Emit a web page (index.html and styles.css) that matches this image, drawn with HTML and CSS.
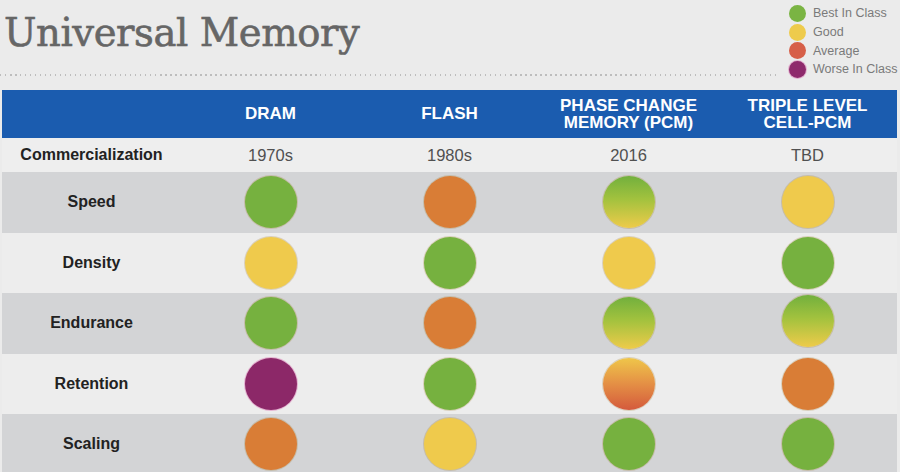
FILE: index.html
```html
<!DOCTYPE html>
<html>
<head>
<meta charset="utf-8">
<link rel="stylesheet" href="styles.css">
</head>
<body>
<div class="top">
  <div class="title-col">
    <h1 class="title">Universal Memory</h1>
    <div class="dots"></div>
  </div>
  <ul class="legend">
    <li><span class="ldot green"></span>Best In Class</li>
    <li><span class="ldot yellow"></span>Good</li>
    <li><span class="ldot red"></span>Average</li>
    <li><span class="ldot purple"></span>Worse In Class</li>
  </ul>
</div>
<div class="table">
  <div class="row head">
    <div class="cell"></div>
    <div class="cell">DRAM</div>
    <div class="cell">FLASH</div>
    <div class="cell">PHASE CHANGE<br>MEMORY (PCM)</div>
    <div class="cell">TRIPLE LEVEL<br>CELL-PCM</div>
  </div>
  <div class="row comm">
    <div class="cell label">Commercialization</div>
    <div class="cell">1970s</div>
    <div class="cell">1980s</div>
    <div class="cell">2016</div>
    <div class="cell">TBD</div>
  </div>
  <div class="row dark">
    <div class="cell label">Speed</div>
    <div class="cell"><span class="dot green"></span></div>
    <div class="cell"><span class="dot orange"></span></div>
    <div class="cell"><span class="dot gy"></span></div>
    <div class="cell"><span class="dot yellow"></span></div>
  </div>
  <div class="row light">
    <div class="cell label">Density</div>
    <div class="cell"><span class="dot yellow"></span></div>
    <div class="cell"><span class="dot green"></span></div>
    <div class="cell"><span class="dot yellow"></span></div>
    <div class="cell"><span class="dot green"></span></div>
  </div>
  <div class="row dark">
    <div class="cell label">Endurance</div>
    <div class="cell"><span class="dot green"></span></div>
    <div class="cell"><span class="dot orange"></span></div>
    <div class="cell"><span class="dot gy"></span></div>
    <div class="cell"><span class="dot gy up"></span></div>
  </div>
  <div class="row light">
    <div class="cell label">Retention</div>
    <div class="cell"><span class="dot purple"></span></div>
    <div class="cell"><span class="dot green"></span></div>
    <div class="cell"><span class="dot yor"></span></div>
    <div class="cell"><span class="dot orange"></span></div>
  </div>
  <div class="row dark">
    <div class="cell label">Scaling</div>
    <div class="cell"><span class="dot orange"></span></div>
    <div class="cell"><span class="dot yellow"></span></div>
    <div class="cell"><span class="dot green"></span></div>
    <div class="cell"><span class="dot green"></span></div>
  </div>
</div>
</body>
</html>
```
FILE: styles.css
```css
html, body {
  margin: 0;
  padding: 0;
  background: #ebebeb;
  font-family: "Liberation Sans", Arial, sans-serif;
  overflow: hidden;
}
.top {
  display: flex;
  height: 90px;
}
.title-col {
  flex: 1;
  display: flex;
  flex-direction: column;
}
.title {
  margin: 0;
  padding: 9px 0 0 4px;
  font-family: "DejaVu Serif", serif;
  font-weight: normal;
  font-size: 38.5px;
  line-height: 48px;
  color: #666;
  -webkit-text-stroke: 0.6px #666;
  letter-spacing: -0.4px;
  height: 65px;
  box-sizing: border-box;
}
.dots {
  margin-top: 9px;
  width: 776px;
  height: 2px;
  background: repeating-linear-gradient(to right, #bdbdbd 0 1.5px, transparent 1.5px 5px);
}
.legend {
  list-style: none;
  margin: 0;
  padding: 4px 3px 0 0;
  width: 108px;
}
.legend li {
  display: flex;
  align-items: center;
  height: 18.7px;
  font-size: 12.5px;
  color: #7a7a7a;
  white-space: nowrap;
}
.ldot {
  width: 17px;
  height: 17px;
  border-radius: 50%;
  margin-right: 7px;
  flex: none;
}
.table {
  margin-left: 2px;
  width: 895px;
}
.row {
  display: grid;
  grid-template-columns: repeat(5, 1fr);
}
.cell {
  display: flex;
  align-items: center;
  justify-content: center;
  text-align: center;
}
.head {
  background: #1b5caf;
  height: 48px;
  color: #fff;
  font-weight: bold;
  font-size: 17px;
  line-height: 17.5px;
}
.comm {
  height: 34px;
  background: #eeeeee;
  font-size: 16.5px;
  color: #505050;
}
.label {
  font-weight: bold;
  font-size: 16px;
  color: #222;
}
.dark, .light {
  height: 60.5px;
}
.dark { background: #d3d4d6; }
.light { background: #ededed; }
.dot {
  width: 52px;
  height: 52px;
  border-radius: 50%;
  box-shadow: 0 0 0 1px rgba(160, 120, 40, 0.25);
}
.green { background: #76b13f; }
.orange { background: #d97d36; }
.yellow { background: #efca4c; }
.purple { background: #8c2868; box-shadow: 0 0 0 1px rgba(220, 120, 180, 0.5); }
.red { background: #d65f48; }
.gy { background: linear-gradient(to bottom, #72b03d 0%, #a3c23e 45%, #eecb4a 100%); }
.up { margin-top: -4px; }
.yor { background: linear-gradient(to bottom, #efc64a 0%, #e48f45 50%, #d45a3c 100%); }
.ldot.green { background: #7ab443; }
.ldot.yellow { background: #eecb4c; }
.ldot.purple { background: #8e2a6c; }
```
